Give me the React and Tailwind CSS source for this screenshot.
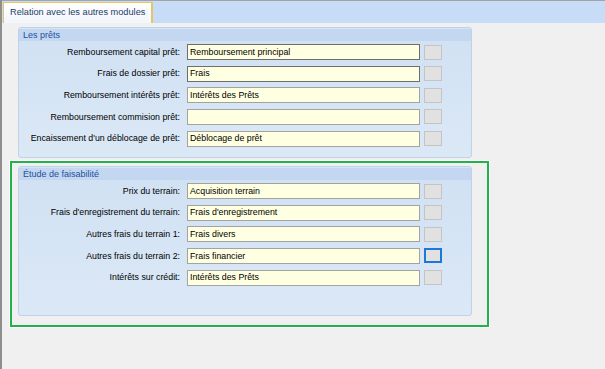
import React from 'react'

const font = { fontFamily: '"Liberation Sans", Arial, sans-serif' }

const prets = [
  { label: 'Remboursement capital prêt:', value: 'Remboursement principal', dark: true },
  { label: 'Frais de dossier prêt:', value: 'Frais', dark: true },
  { label: 'Remboursement intérêts prêt:', value: 'Intérêts des Prêts' },
  { label: 'Remboursement commision prêt:', value: '' },
  { label: "Encaissement d'un déblocage de prêt:", value: 'Déblocage de prêt' },
]

const faisabilite = [
  { label: 'Prix du terrain:', value: 'Acquisition terrain' },
  { label: "Frais d'enregistrement du terrain:", value: "Frais d'enregistrement" },
  { label: 'Autres frais du terrain 1:', value: 'Frais divers' },
  { label: 'Autres frais du terrain 2:', value: 'Frais financier', focus: true },
  { label: 'Intérêts sur crédit:', value: 'Intérêts des Prêts' },
]

const Row = ({ row }) => (
  <div className="flex items-center h-4">
    <div className="w-[161px] text-right text-[8.8px] text-black leading-none whitespace-nowrap">
      {row.label}
    </div>
    <div
      className={`ml-[7px] w-[233px] h-4 bg-[#ffffe1] border flex items-center pl-[2px] text-[8.8px] text-black leading-none
        ${row.dark ? 'border-[#6e6e6e]' : 'border-[#a3a3a3]'}`}
    >
      {row.value}
    </div>
    {row.focus ? (
      <div className="ml-[4px] w-[18px] h-[15px] bg-[#e1e1e1] border-2 border-[#2277d6]" />
    ) : (
      <div className="ml-[4px] w-[18px] h-[15px] bg-[#e1e1e1] border border-[#c4c4c4]" />
    )}
  </div>
)

const Panel = ({ title, rows, height }) => (
  <div
    className={`w-[454px] ${height} rounded-[3px] border border-[#bed2ea] bg-gradient-to-b from-[#d0e1f3] to-[#dbe8f6] overflow-hidden`}
  >
    <div className="h-[13px] bg-[#c3d8f0] border-t border-[#d6e5f6] pl-[4px] flex items-center text-[9px] text-[#1f4f9e] leading-none">
      {title}
    </div>
    <div className="mt-[3px] flex flex-col gap-[5.67px]">
      {rows.map((r) => (
        <Row key={r.label} row={r} />
      ))}
    </div>
  </div>
)

export default function App() {
  return (
    <div className="w-[605px] h-[369px] bg-[#f0f0f0] border-l-2 border-[#8e8e8e] overflow-hidden" style={font}>
      {/* Tab strip */}
      <div className="h-[23px] bg-[#c6dcf7] border-t border-[#a4a4a4] flex items-end pl-[1px]">
        <div className="h-[21px] px-[6px] flex items-center bg-gradient-to-b from-white to-[#f2f5fa] border-t border-l border-r-2 border-[#e6c567] text-[9.2px] text-[#1b3a6b] leading-none">
          Relation avec les autres modules
        </div>
      </div>

      <div className="pt-[4px]">
        {/* Les prêts */}
        <div className="ml-[16px]">
          <Panel title="Les prêts" rows={prets} height="h-[131px]" />
        </div>

        {/* Étude de faisabilité (highlighted) */}
        <div className="mt-[3px] ml-[8px] w-[479px] h-[166px] border-2 border-[#22b14c] ring-1 ring-white pt-[3px] pl-[6px]">
          <Panel title="Étude de faisabilité" rows={faisabilite} height="h-[150px]" />
        </div>
      </div>
    </div>
  )
}
